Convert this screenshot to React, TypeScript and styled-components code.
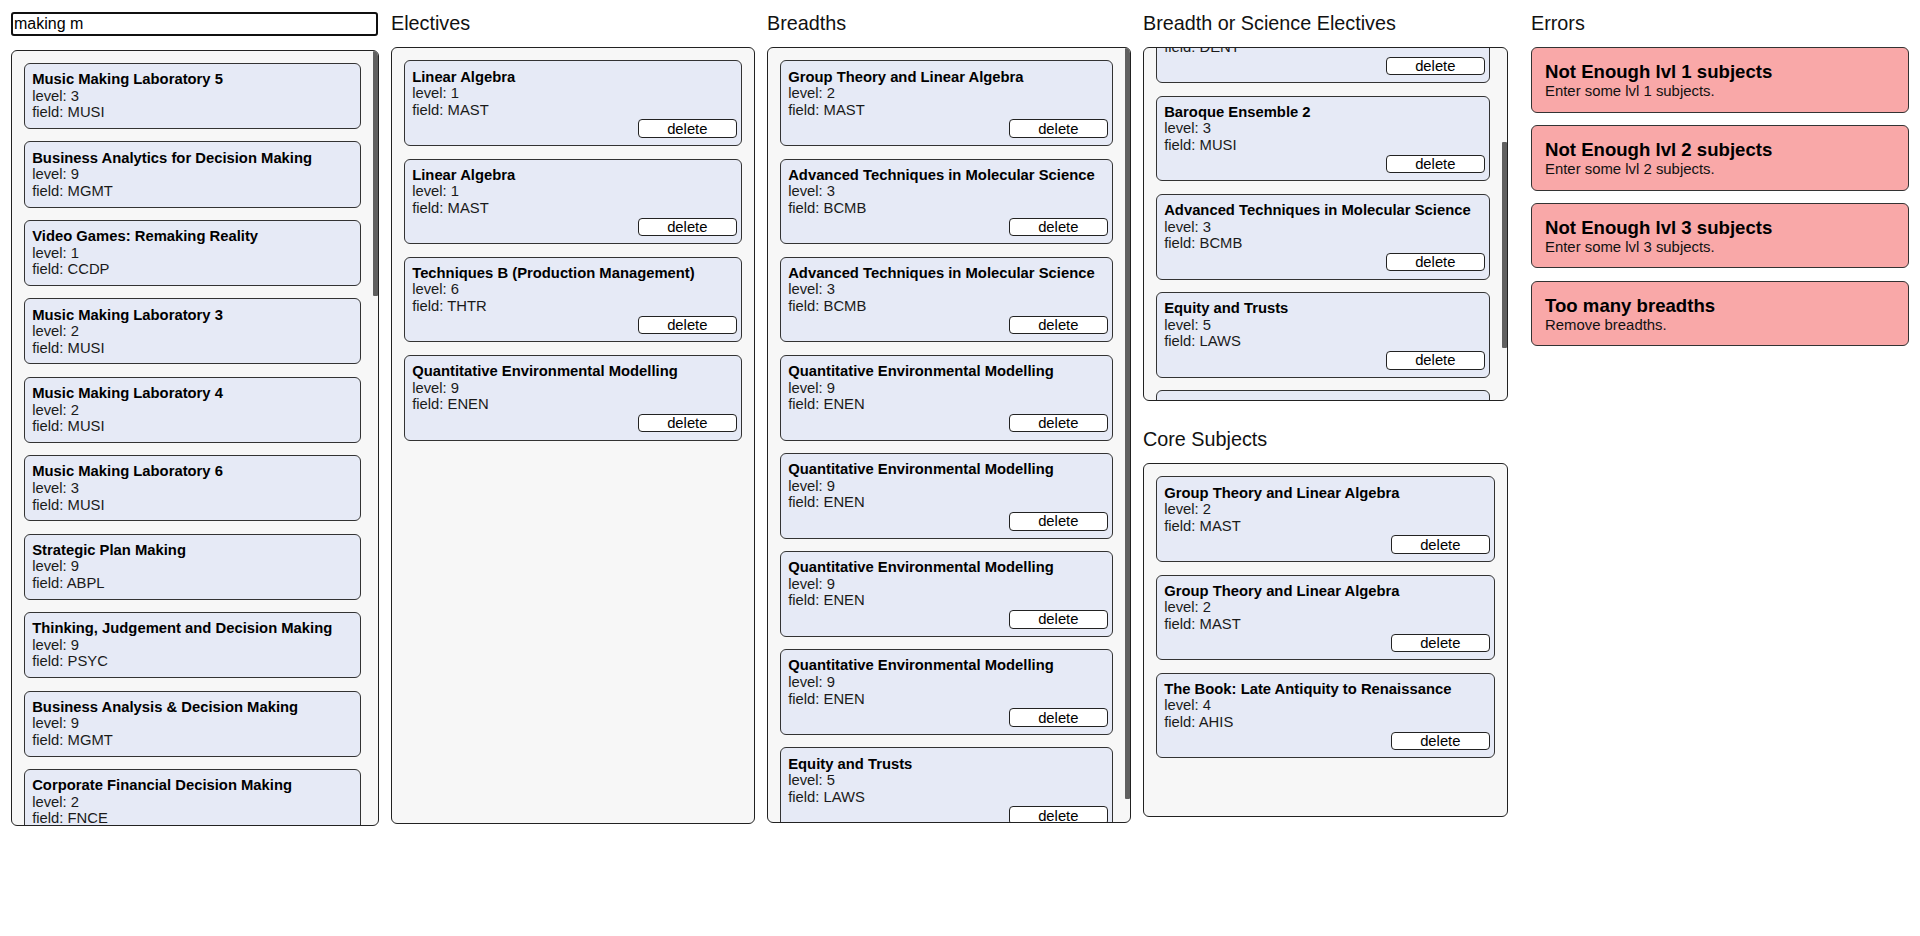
import React, { useLayoutEffect, useRef, useState } from 'react';
import styled, { createGlobalStyle } from 'styled-components';

type Subject = { name: string; level: number; field: string };

const GlobalStyle = createGlobalStyle`
  html, body {
    margin: 0;
    padding: 0;
    background: #ffffff;
    font-family: "Liberation Sans", Arial, sans-serif;
    color: #111;
  }
  * { box-sizing: border-box; }
`;

const Page = styled.div`
  display: flex;
  align-items: flex-start;
  gap: 12px;
  padding: 11.6px 11px 0 11px;
  height: 936px;
`;

const Column = styled.div<{ $width: number; $offset?: number }>`
  display: flex;
  flex-direction: column;
  flex: 0 0 ${p => p.$width}px;
  margin-left: ${p => p.$offset ?? 0}px;
`;

const Search = styled.input`
  width: 367px;
  height: 24px;
  margin: 0 0 14px;
  padding: 0 1px;
  border: 2px solid #101010;
  border-radius: 3px;
  outline: none;
  font-family: "Liberation Sans", Arial, sans-serif;
  font-size: 16px;
  color: #000;
  background: #fff;
`;

const Heading = styled.div<{ $spaced?: boolean }>`
  font-size: 19.8px;
  line-height: 22px;
  color: #111;
  margin: ${p => (p.$spaced ? '26.6px' : '0')} 0 13.4px;
`;

const Panel = styled.div<{ $height: number }>`
  display: flex;
  height: ${p => p.$height}px;
  overflow: hidden;
  background: #f7f7f7;
  border: 1px solid #222;
  border-radius: 6px;
`;

const List = styled.div`
  flex: 1;
  display: flex;
  flex-direction: column;
  gap: 12.4px;
  padding: 12.4px 12px;
  overflow-y: auto;
  scrollbar-width: none;

  &::-webkit-scrollbar {
    display: none;
  }
`;

const Track = styled.div`
  flex: 0 0 5px;
  display: flex;
  flex-direction: column;
`;

const Thumb = styled.div`
  flex: 0 0 auto;
  width: 5px;
  background: #606060;
  border-radius: 1px;
`;

const Card = styled.div`
  flex: 0 0 auto;
  padding: 7.2px 4.5px 7.2px 7.2px;
  background: #e6eaf6;
  border: 1px solid #333;
  border-radius: 6px;
  font-size: 14.8px;
  line-height: 16.56px;
  color: #1a1a1a;
`;

const CardTitle = styled.div`
  font-weight: bold;
  color: #000;
`;

const CardRow = styled.div``;

const ButtonRow = styled.div`
  display: flex;
  justify-content: flex-end;
  margin-top: 1.2px;
`;

const DeleteButton = styled.button`
  width: 98.4px;
  height: 18.5px;
  padding: 0;
  background: #fff;
  border: 1px solid #222;
  border-radius: 4px;
  font-family: "Liberation Sans", Arial, sans-serif;
  font-size: 14.8px;
  line-height: 16px;
  color: #000;
`;

const ErrorList = styled.div`
  display: flex;
  flex-direction: column;
  gap: 12.4px;
`;

const ErrorBox = styled.div`
  padding: 12px 13px;
  background: #f9a8a8;
  border: 1px solid #333;
  border-radius: 6px;
`;

const ErrorTitle = styled.div`
  font-size: 18.6px;
  line-height: 23px;
  font-weight: bold;
  color: #000;
`;

const ErrorText = styled.div`
  font-size: 14.9px;
  line-height: 16.56px;
  color: #111;
`;

const s = (name: string, level: number, field: string): Subject => ({ name, level, field });

const searchResults: Subject[] = [
  s('Music Making Laboratory 5', 3, 'MUSI'),
  s('Business Analytics for Decision Making', 9, 'MGMT'),
  s('Video Games: Remaking Reality', 1, 'CCDP'),
  s('Music Making Laboratory 3', 2, 'MUSI'),
  s('Music Making Laboratory 4', 2, 'MUSI'),
  s('Music Making Laboratory 6', 3, 'MUSI'),
  s('Strategic Plan Making', 9, 'ABPL'),
  s('Thinking, Judgement and Decision Making', 9, 'PSYC'),
  s('Business Analysis & Decision Making', 9, 'MGMT'),
  s('Corporate Financial Decision Making', 2, 'FNCE'),
  s('Music Making Laboratory 1', 1, 'MUSI'),
  s('Music Making Laboratory 2', 1, 'MUSI'),
  s('Policy Making and Public Management', 9, 'POLS'),
  s('Decision Making Under Uncertainty', 9, 'MGMT'),
  s('Meaning Making in Media', 3, 'MECM'),
  s('Managerial Decision Making', 9, 'MGMT'),
  s('Making Music Together', 1, 'MUSI'),
  s('Film Making Methods', 2, 'SCRN'),
  s('Map Making and Spatial Media', 3, 'GEOG'),
  s('Making Modern Melbourne', 2, 'HIST'),
  s('Making Meaning with Data', 2, 'COMP'),
  s('Peace Making and Mediation', 9, 'INTS'),
  s('Model Making for Architecture', 1, 'ABPL'),
  s('Marketing Decision Making', 9, 'MKTG'),
  s('Ethical Decision Making in Medicine', 9, 'MEDI'),
  s('Making Modern Asia', 2, 'ASIA'),
  s('Instrument Making Workshop', 3, 'MUSI'),
  s('Clinical Decision Making', 9, 'NURS'),
  s('Print Making Media', 1, 'FINA'),
  s('Making Markets', 3, 'ECON'),
  s('Legal Decision Making', 9, 'LAWS'),
];

const linearAlgebra = s('Linear Algebra', 1, 'MAST');
const groupTheory = s('Group Theory and Linear Algebra', 2, 'MAST');
const molecular = s('Advanced Techniques in Molecular Science', 3, 'BCMB');
const quantitative = s('Quantitative Environmental Modelling', 9, 'ENEN');
const equity = s('Equity and Trusts', 5, 'LAWS');

const electives: Subject[] = [
  linearAlgebra,
  linearAlgebra,
  s('Techniques B (Production Management)', 6, 'THTR'),
  quantitative,
];

const breadths: Subject[] = [
  groupTheory,
  molecular,
  molecular,
  quantitative,
  quantitative,
  quantitative,
  quantitative,
  equity,
];

const breadthOrScience: Subject[] = [
  s('Music Making Laboratory 3', 2, 'MUSI'),
  s('Oral Biology and Pathology', 3, 'DENT'),
  s('Baroque Ensemble 2', 3, 'MUSI'),
  molecular,
  equity,
  quantitative,
];

const core: Subject[] = [
  groupTheory,
  groupTheory,
  s('The Book: Late Antiquity to Renaissance', 4, 'AHIS'),
];

const errors = [
  { title: 'Not Enough lvl 1 subjects', text: 'Enter some lvl 1 subjects.' },
  { title: 'Not Enough lvl 2 subjects', text: 'Enter some lvl 2 subjects.' },
  { title: 'Not Enough lvl 3 subjects', text: 'Enter some lvl 3 subjects.' },
  { title: 'Too many breadths', text: 'Remove breadths.' },
];

function SubjectCard({ subject, removable }: { subject: Subject; removable?: boolean }) {
  return (
    <Card>
      <CardTitle>{subject.name}</CardTitle>
      <CardRow>level: {subject.level}</CardRow>
      <CardRow>field: {subject.field}</CardRow>
      {removable && (
        <ButtonRow>
          <DeleteButton>delete</DeleteButton>
        </ButtonRow>
      )}
    </Card>
  );
}

// panel with a thin always-visible scroll indicator (native bars are hidden in headless chrome)
function SubjectPanel({
  height,
  startAt = 0,
  children,
}: {
  height: number;
  startAt?: number;
  children: React.ReactNode;
}) {
  const listRef = useRef<HTMLDivElement>(null);
  const [thumb, setThumb] = useState<{ top: number; size: number } | null>(null);

  useLayoutEffect(() => {
    const el = listRef.current;
    if (!el) return;
    if (startAt) el.scrollTop = startAt;
    const update = () => {
      if (el.scrollHeight <= el.clientHeight) {
        setThumb(null);
        return;
      }
      const size = (el.clientHeight * el.clientHeight) / el.scrollHeight;
      const top = (el.scrollTop / el.scrollHeight) * el.clientHeight;
      setThumb({ top, size });
    };
    update();
    el.addEventListener('scroll', update);
    return () => el.removeEventListener('scroll', update);
  }, [startAt]);

  return (
    <Panel $height={height}>
      <List ref={listRef}>{children}</List>
      {thumb && (
        <Track>
          <Thumb style={{ marginTop: thumb.top, height: thumb.size }} />
        </Track>
      )}
    </Panel>
  );
}

function App() {
  const searchRef = useRef<HTMLInputElement>(null);

  useLayoutEffect(() => {
    const input = searchRef.current;
    if (input) {
      input.focus();
      input.setSelectionRange(input.value.length, input.value.length);
    }
  }, []);

  return (
    <>
      <GlobalStyle />
      <Page>
        <Column $width={368}>
          <Search ref={searchRef} defaultValue="making m" />
          <SubjectPanel height={776}>
            {searchResults.map((sub, i) => (
              <SubjectCard key={i} subject={sub} />
            ))}
          </SubjectPanel>
        </Column>

        <Column $width={364}>
          <Heading>Electives</Heading>
          <SubjectPanel height={777}>
            {electives.map((sub, i) => (
              <SubjectCard key={i} subject={sub} removable />
            ))}
          </SubjectPanel>
        </Column>

        <Column $width={364}>
          <Heading>Breadths</Heading>
          <SubjectPanel height={776}>
            {breadths.map((sub, i) => (
              <SubjectCard key={i} subject={sub} removable />
            ))}
          </SubjectPanel>
        </Column>

        <Column $width={365}>
          <Heading>Breadth or Science Electives</Heading>
          <SubjectPanel height={354} startAt={161}>
            {breadthOrScience.map((sub, i) => (
              <SubjectCard key={i} subject={sub} removable />
            ))}
          </SubjectPanel>
          <Heading $spaced>Core Subjects</Heading>
          <SubjectPanel height={354}>
            {core.map((sub, i) => (
              <SubjectCard key={i} subject={sub} removable />
            ))}
          </SubjectPanel>
        </Column>

        <Column $width={378} $offset={11}>
          <Heading>Errors</Heading>
          <ErrorList>
            {errors.map(err => (
              <ErrorBox key={err.title}>
                <ErrorTitle>{err.title}</ErrorTitle>
                <ErrorText>{err.text}</ErrorText>
              </ErrorBox>
            ))}
          </ErrorList>
        </Column>
      </Page>
    </>
  );
}

export default App;
